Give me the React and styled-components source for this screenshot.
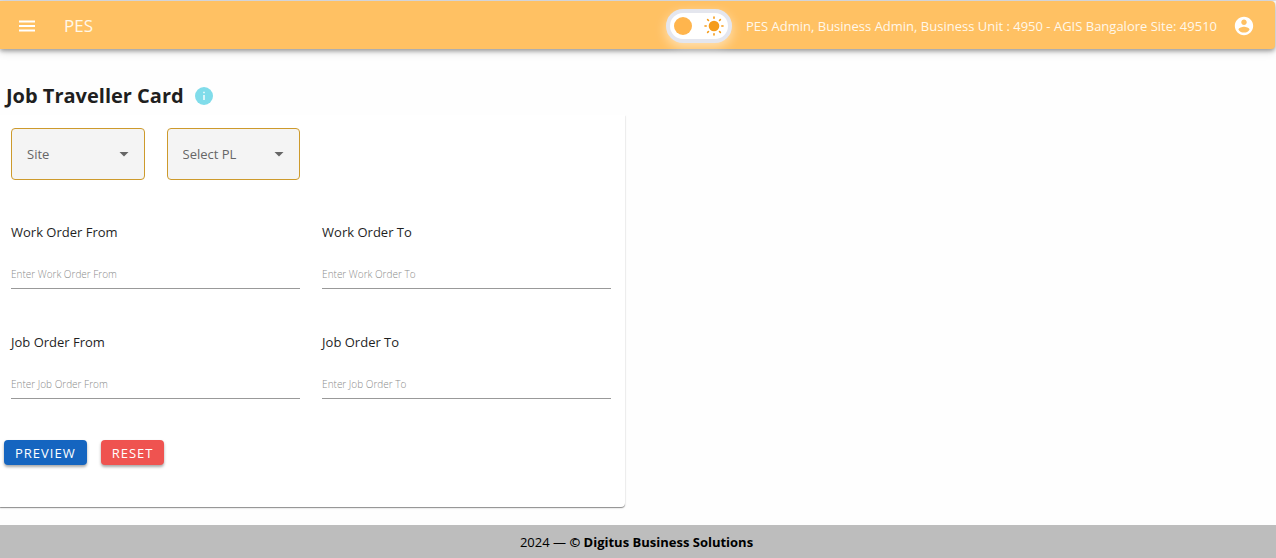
import React from "react";
import styled, { createGlobalStyle } from "styled-components";

const GlobalStyle = createGlobalStyle`
  * { box-sizing: border-box; }
  html, body { margin: 0; }
  body {
    background: #fefefe;
    color: #1f1f1f;
    font-family: "Open Sans", "Noto Sans", sans-serif;
    font-size: 13px;
    line-height: 20px;
  }
  button, input, select { font-family: inherit; }
`;

const Page = styled.div`
  min-height: 100vh;
  display: flex;
  flex-direction: column;
  border-top: 1px solid #dfe1e6;
`;

const AppBar = styled.header`
  display: flex;
  align-items: center;
  height: 48px;
  margin-right: 1px;
  padding: 2px 20px 0 17px;
  background: #ffc163;
  color: #fff8ea;
  border-radius: 0 4px 4px 0;
  box-shadow: 0 2px 4px rgba(0, 0, 0, 0.34), 0 4px 8px rgba(0, 0, 0, 0.1);
`;

const IconButton = styled.button`
  display: flex;
  padding: 0;
  border: 0;
  background: none;
  color: ${(p) => p.$color || "#ffffff"};
  cursor: pointer;
`;

const Brand = styled.span`
  margin-left: 27px;
  font-size: 17px;
  line-height: 24px;
`;

const Session = styled.div`
  display: flex;
  align-items: center;
  margin-left: auto;
`;

const UserInfo = styled.span`
  margin: 0 16px 0 14px;
  font-size: 13px;
`;

const ThemeToggle = styled.button`
  display: flex;
  align-items: center;
  justify-content: space-between;
  width: 66px;
  height: 34px;
  padding: 0 4px;
  border: 4px solid #e4e6ee;
  border-radius: 17px;
  background: #ffffff;
  box-shadow: 0 4px 12px rgba(255, 255, 255, 0.55);
  cursor: pointer;
`;

const Knob = styled.span`
  width: 18px;
  height: 18px;
  border-radius: 50%;
  background: #ffb54d;
`;

const Main = styled.main`
  flex: 1;
  padding-bottom: 18px;
`;

const Heading = styled.div`
  display: flex;
  align-items: center;
  gap: 10px;
  padding: 32px 6px 4px;
`;

const Title = styled.h1`
  margin: 0;
  font-size: 20px;
  font-weight: 700;
  line-height: 30px;
`;

const Card = styled.form`
  width: 49%;
  min-width: 320px;
  padding-bottom: 42px;
  border-radius: 0 0 4px 0;
  background: #ffffff;
  box-shadow: 0 1px 1px rgba(0, 0, 0, 0.42), 0 1px 3px rgba(0, 0, 0, 0.08);
  clip-path: inset(0 -4px -4px 0);
`;

const Filters = styled.div`
  display: grid;
  grid-template-columns: repeat(4, 1fr);
  gap: 22px;
  padding: 13px 14px 0 11px;
`;

const SelectBox = styled.div`
  display: grid;
  align-items: center;
  height: 52px;
  border: 1px solid #cd9a2c;
  border-radius: 4px;
  background: #f4f4f4;
  > * { grid-area: 1 / 1; }
  > svg { justify-self: end; margin-right: 8px; pointer-events: none; }
`;

const Select = styled.select`
  width: 100%;
  height: 50px;
  padding: 0 32px 0 15px;
  border: 0;
  appearance: none;
  background: transparent;
  color: #666666;
  font-size: 13px;
`;

const Fields = styled.div`
  display: grid;
  grid-template-columns: 1fr 1fr;
  gap: 43px 22px;
  padding: 42px 14px 0 11px;
`;

const Field = styled.div`
  display: flex;
  flex-direction: column;
  gap: 19px;
`;

const Label = styled.label`
  font-size: 13px;
`;

const TextInput = styled.input`
  width: 100%;
  height: 28px;
  padding: 0 0 2px;
  border: 0;
  border-bottom: 1px solid #999999;
  border-radius: 0;
  background: transparent;
  font-size: 10px;
  &::placeholder { color: #8c8c8c; font-weight: 300; opacity: 1; }
`;

const Actions = styled.div`
  display: flex;
  gap: 14px;
  padding: 41px 4px 0;
`;

const Button = styled.button`
  height: 25px;
  padding: 0 11px;
  border: 0;
  border-radius: 4px;
  background: ${(p) => p.$color};
  color: #ffffff;
  font-size: 13px;
  letter-spacing: 1px;
  text-transform: uppercase;
  box-shadow: 0 2px 3px rgba(0, 0, 0, 0.35);
  cursor: pointer;
`;

const Footer = styled.footer`
  padding: 7px 3px 6px 0;
  background: #bdbdbd;
  color: #000000;
  font-size: 13px;
  text-align: center;
`;

const MenuIcon = () => (
  <svg width="20" height="20" viewBox="0 0 20 20" fill="currentColor" aria-hidden="true">
    <path d="M2 4.5h16v2H2zM2 9h16v2H2zM2 13.5h16v2H2z" />
  </svg>
);

const SunIcon = () => (
  <svg width="20" height="20" viewBox="0 0 20 20" fill="#f59c1a" aria-hidden="true">
    <circle cx="10" cy="10" r="5.3" />
    {[0, 45, 90, 135, 180, 225, 270, 315].map((angle) => (
      <rect key={angle} x="9.2" y="0.2" width="1.6" height="2.8" rx="0.8" transform={`rotate(${angle} 10 10)`} />
    ))}
  </svg>
);

const AccountIcon = () => (
  <svg width="22" height="22" viewBox="0 0 24 24" fill="currentColor" aria-hidden="true">
    <path d="M12 2C6.48 2 2 6.48 2 12s4.48 10 10 10 10-4.48 10-10S17.52 2 12 2zm0 3c1.66 0 3 1.34 3 3s-1.34 3-3 3-3-1.34-3-3 1.34-3 3-3zm0 14.2c-2.5 0-4.71-1.28-6-3.22.03-1.99 4-3.08 6-3.08 1.99 0 5.97 1.09 6 3.08-1.29 1.94-3.5 3.22-6 3.22z" />
  </svg>
);

const InfoIcon = () => (
  <svg width="20" height="20" viewBox="0 0 20 20" aria-hidden="true">
    <circle cx="10" cy="10" r="9" fill="currentColor" />
    <path d="M9.3 9h1.4v5H9.3zM9.3 5.8h1.4v1.4H9.3z" fill="#fff" />
  </svg>
);

const CaretIcon = () => (
  <svg width="24" height="24" viewBox="0 0 24 24" fill="#666" aria-hidden="true">
    <path d="M7.5 10h9L12 14.5Z" />
  </svg>
);

const fields = [
  { id: "work-from", label: "Work Order From" },
  { id: "work-to", label: "Work Order To" },
  { id: "job-from", label: "Job Order From" },
  { id: "job-to", label: "Job Order To" },
];

export default function App() {
  return (
    <>
      <GlobalStyle />
      <Page>
        <AppBar>
          <IconButton type="button" aria-label="Menu"><MenuIcon /></IconButton>
          <Brand>PES</Brand>
          <Session>
            <ThemeToggle type="button" aria-label="Toggle theme">
              <Knob />
              <SunIcon />
            </ThemeToggle>
            <UserInfo>PES Admin, Business Admin, Business Unit : 4950 - AGIS Bangalore Site: 49510</UserInfo>
            <IconButton type="button" aria-label="Account"><AccountIcon /></IconButton>
          </Session>
        </AppBar>
        <Main>
          <Heading>
            <Title>Job Traveller Card</Title>
            <IconButton type="button" aria-label="Information" $color="#80dcea"><InfoIcon /></IconButton>
          </Heading>
          <Card onSubmit={(e) => e.preventDefault()}>
            <Filters>
              {["Site", "Select PL"].map((name) => (
                <SelectBox key={name}>
                  <Select aria-label={name}><option>{name}</option></Select>
                  <CaretIcon />
                </SelectBox>
              ))}
            </Filters>
            <Fields>
              {fields.map(({ id, label }) => (
                <Field key={id}>
                  <Label htmlFor={id}>{label}</Label>
                  <TextInput id={id} placeholder={`Enter ${label}`} />
                </Field>
              ))}
            </Fields>
            <Actions>
              <Button type="submit" $color="#1565c0">Preview</Button>
              <Button type="reset" $color="#ef5350">Reset</Button>
            </Actions>
          </Card>
        </Main>
        <Footer>2024 — <strong>© Digitus Business Solutions</strong></Footer>
      </Page>
    </>
  );
}
